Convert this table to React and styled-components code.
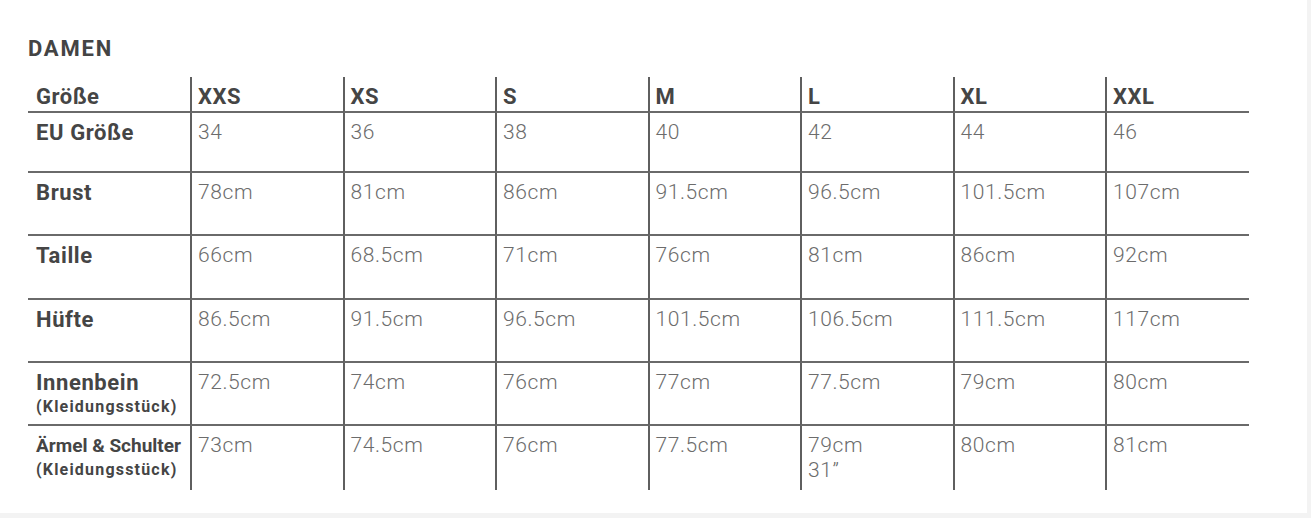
import React from "react";
import styled, { createGlobalStyle } from "styled-components";

const GlobalStyle = createGlobalStyle`
  * {
    box-sizing: border-box;
  }
  body {
    margin: 0;
    background-color: #f3f3f3;
    font-family: Roboto, "Liberation Sans", sans-serif;
  }
`;

const Panel = styled.div`
  width: 1307px;
  height: 513px;
  background-color: #ffffff;
  padding: 36px 0 0 28px;
`;

const Title = styled.h2`
  margin: 0 0 15px;
  font-size: 22px;
  line-height: 26px;
  font-weight: 700;
  letter-spacing: 1.8px;
  color: #444;
`;

const Grid = styled.div`
  display: grid;
  grid-template-columns: 162px repeat(6, 152.5px) 144px;
  grid-template-rows: 36px 60px 63px 64px 63px 63px 64px;
  width: 1221px;
`;

const Cell = styled.div`
  padding: 7px 8px 0 ${({ $first }) => ($first ? "8px" : "6px")};
  border-left: ${({ $first }) => ($first ? "none" : "2px solid #5f5f5f")};
  border-bottom: ${({ $last }) => ($last ? "none" : "2px solid #6a6a6a")};
  color: ${({ $head }) => ($head ? "#454545" : "#6c6c6c")};
  font-size: ${({ $head }) => ($head ? "22px" : "21px")};
  font-weight: ${({ $head }) => ($head ? 700 : 300)};
  letter-spacing: ${({ $head }) => ($head ? "0.5px" : "0.6px")};
  line-height: ${({ $head }) => ($head ? "26px" : "25px")};
`;

const Label = styled.div`
  font-size: ${({ $size }) => $size || 22}px;
  line-height: 26px;
  letter-spacing: ${({ $size }) => ($size ? "0px" : "0.6px")};
  white-space: nowrap;
`;

const Note = styled.div`
  font-size: 16px;
  line-height: 22px;
  letter-spacing: 1.2px;
  white-space: nowrap;
`;

const sizes = ["XXS", "XS", "S", "M", "L", "XL", "XXL"];

const rows = [
  { label: "EU Größe", values: ["34", "36", "38", "40", "42", "44", "46"] },
  { label: "Brust", values: ["78cm", "81cm", "86cm", "91.5cm", "96.5cm", "101.5cm", "107cm"] },
  { label: "Taille", values: ["66cm", "68.5cm", "71cm", "76cm", "81cm", "86cm", "92cm"] },
  { label: "Hüfte", values: ["86.5cm", "91.5cm", "96.5cm", "101.5cm", "106.5cm", "111.5cm", "117cm"] },
  {
    label: "Innenbein",
    note: "(Kleidungsstück)",
    values: ["72.5cm", "74cm", "76cm", "77cm", "77.5cm", "79cm", "80cm"],
  },
  {
    label: "Ärmel & Schulter",
    size: 19,
    note: "(Kleidungsstück)",
    values: ["73cm", "74.5cm", "76cm", "77.5cm", ["79cm", "31\u201d"], "80cm", "81cm"],
  },
];

const App = () => {
  return (
    <>
      <GlobalStyle />
      <Panel>
        <Title>DAMEN</Title>
        <Grid>
          <Cell $head $first>Größe</Cell>
          {sizes.map((s) => (
            <Cell key={s} $head>{s}</Cell>
          ))}

          {rows.map((row, i) => {
            const last = i === rows.length - 1;
            return (
              <React.Fragment key={row.label}>
                <Cell $head $first $last={last}>
                  <Label $size={row.size}>{row.label}</Label>
                  {row.note && <Note>{row.note}</Note>}
                </Cell>
                {row.values.map((v, j) => (
                  <Cell key={j} $last={last}>
                    {Array.isArray(v) ? v.map((line) => <div key={line}>{line}</div>) : v}
                  </Cell>
                ))}
              </React.Fragment>
            );
          })}
        </Grid>
      </Panel>
    </>
  );
};

export default App;
